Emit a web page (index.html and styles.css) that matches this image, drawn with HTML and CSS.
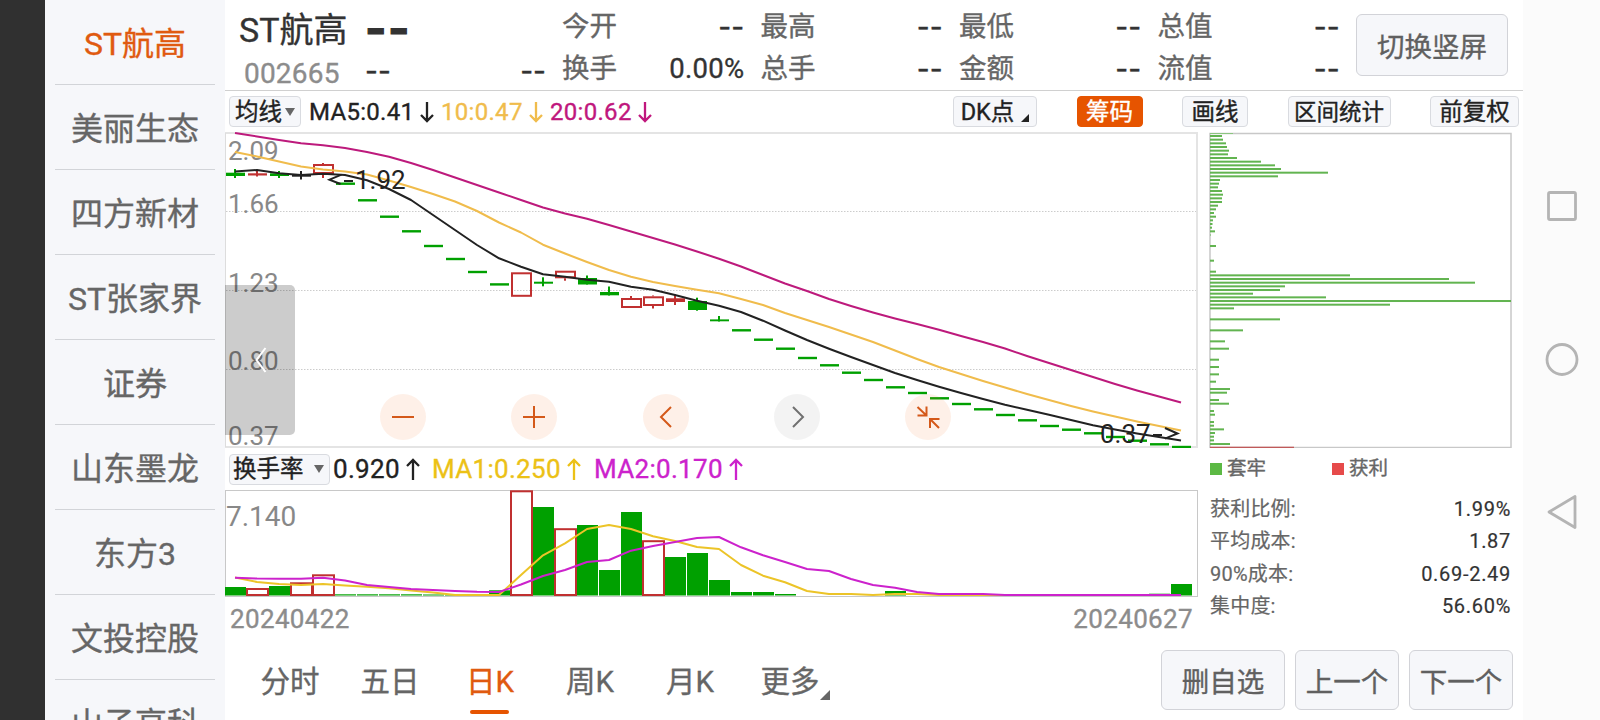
FILE: index.html
```html
<!DOCTYPE html>
<html lang="zh-CN">
<head>
    <meta charset="UTF-8">
    <meta name="viewport" content="width=device-width, initial-scale=1.0">
    <title>ST航高 002665</title>
    <link rel="stylesheet" href="styles.css">
</head>
<body>
    <div class="bezel"></div>

    <ul class="watchlist">
        <li class="active">ST航高</li>
        <li>美丽生态</li>
        <li>四方新材</li>
        <li>ST张家界</li>
        <li>证券</li>
        <li>山东墨龙</li>
        <li>东方3</li>
        <li>文投控股</li>
        <li>山子高科</li>
    </ul>

    <main class="main">
        <header class="quote">
            <div class="stock">
                <div class="stock-name">ST航高</div>
                <div class="stock-code">002665</div>
            </div>
            <div class="price">
                <div class="price-now">--</div>
                <div class="price-change"><span>--</span><span>--</span></div>
            </div>
            <dl class="fields">
                <div><dt>今开</dt><dd class="dash">--</dd></div>
                <div><dt>最高</dt><dd class="dash">--</dd></div>
                <div><dt>最低</dt><dd class="dash">--</dd></div>
                <div><dt>总值</dt><dd class="dash">--</dd></div>
                <div><dt>换手</dt><dd>0.00%</dd></div>
                <div><dt>总手</dt><dd class="dash">--</dd></div>
                <div><dt>金额</dt><dd class="dash">--</dd></div>
                <div><dt>流值</dt><dd class="dash">--</dd></div>
            </dl>
            <button class="btn btn-rotate">切换竖屏</button>
        </header>

        <div class="toolbar">
            <button class="chip chip-ma">均线<i class="caret"></i></button>
            <div class="ma ma5">MA5:0.41<svg class="arrow" viewBox="0 0 14 22"><path d="M7 1v19M1 14l6 6 6-6"/></svg></div>
            <div class="ma ma10">10:0.47<svg class="arrow" viewBox="0 0 14 22"><path d="M7 1v19M1 14l6 6 6-6"/></svg></div>
            <div class="ma ma20">20:0.62<svg class="arrow" viewBox="0 0 14 22"><path d="M7 1v19M1 14l6 6 6-6"/></svg></div>
            <div class="tools">
                <button class="chip chip-dk">DK点<i class="corner"></i></button>
                <button class="chip chip-on">筹码</button>
                <button class="chip">画线</button>
                <button class="chip chip-range">区间统计</button>
                <button class="chip chip-adjust">前复权</button>
            </div>
        </div>

        <div class="content">
            <section class="charts">
                <div class="kline">
                    <svg id="kline" width="973" height="316" viewBox="225 132 973 316"></svg>
                    <div class="drawer"><svg width="12" height="28" viewBox="0 0 12 28"><path d="M10.500 2L1.500 14l9 12"/></svg></div>
                    <div class="zoom">
                        <button><svg viewBox="0 0 46 46"><path d="M12 23h22"/></svg></button>
                        <button><svg viewBox="0 0 46 46"><path d="M12 23h22M23 12v22"/></svg></button>
                        <button><svg viewBox="0 0 46 46"><path d="M28 13L18 23l10 10"/></svg></button>
                        <button class="off"><svg viewBox="0 0 46 46"><path d="M19 13l10 10-10 10"/></svg></button>
                        <button><svg viewBox="0 0 46 46"><path d="M12.500 13l9 8.500M21.500 12.500v9h-9M34 34l-9-9M25 34v-9h9.500"/></svg></button>
                    </div>
                </div>

                <div class="turnover">
                    <button class="chip chip-turnover">换手率<i class="caret"></i></button>
                    <div class="ma to">0.920<svg class="arrow" viewBox="0 0 14 22"><path d="M7 22V2M1 8l6-6 6 6"/></svg></div>
                    <div class="ma to1">MA1:0.250<svg class="arrow" viewBox="0 0 14 22"><path d="M7 22V2M1 8l6-6 6 6"/></svg></div>
                    <div class="ma to2">MA2:0.170<svg class="arrow" viewBox="0 0 14 22"><path d="M7 22V2M1 8l6-6 6 6"/></svg></div>
                </div>

                <svg id="volume" width="973" height="108" viewBox="225 490 973 108"></svg>
                <div class="dates"><span>20240422</span><span>20240627</span></div>
            </section>

            <aside class="chips">
                <svg id="chips" width="304" height="316" viewBox="1209 132 304 316"></svg>
                <div class="legend">
                    <span class="trapped">套牢</span>
                    <span class="profit">获利</span>
                </div>
                <dl class="stats">
                    <div><dt>获利比例:</dt><dd>1.99%</dd></div>
                    <div><dt>平均成本:</dt><dd>1.87</dd></div>
                    <div><dt>90%成本:</dt><dd>0.69-2.49</dd></div>
                    <div><dt>集中度:</dt><dd>56.60%</dd></div>
                </dl>
            </aside>
        </div>

        <footer class="footer">
            <nav class="tabs">
                <a>分时</a>
                <a>五日</a>
                <a class="active">日K</a>
                <a>周K</a>
                <a>月K</a>
                <a>更多<i class="corner"></i></a>
            </nav>
            <button class="btn btn-del">删自选</button>
            <button class="btn">上一个</button>
            <button class="btn">下一个</button>
        </footer>
    </main>

    <div class="sysnav">
        <svg width="36" height="34" viewBox="0 0 36 34"><rect x="4.500" y="3.500" width="27" height="27" rx="1.500"/></svg>
        <svg width="36" height="34" viewBox="0 0 36 34"><circle cx="18" cy="17.500" r="15"/></svg>
        <svg width="36" height="34" viewBox="0 0 36 34"><path d="M5 17L31 1.500v31z"/></svg>
    </div>

    <script>
        const GREEN = '#00a000', RED = '#c03030', BLACK = '#222';
        const STEP = 22;
        const cx = i => 235 + i * STEP;

        // [type, top, bottom, high, low]  g = solid green, r = solid red, h = hollow red, k = flat
        const candles = [
            ['g', 172.7, 176, 169, 178], ['r', 173.3, 175.5, 170.5, 176.5], ['g', 173.3, 176, 171, 178],
            ['k', 174.5, 176.7, 171, 179.5], ['h', 164, 174, 163, 178]
        ];
        [183.7, 200.3, 216.7, 231.3, 246, 259, 272, 284.4].forEach(y => candles.push(['g', y - 1.2, y + 1.2]));
        candles.push(
            ['h', 272.3, 296.8], ['g', 281.7, 283.7, 277.3, 286.3], ['h', 270.7, 278.3, 270.7, 280.7],
            ['g', 278, 284.5, 275.5, 284.5], ['g', 292, 295.3, 286.5, 295.5], ['h', 298, 308, 296, 308],
            ['h', 296.3, 306, 295.5, 308.5], ['r', 298.3, 302, 294.3, 305], ['g', 301, 310, 297.7, 310.7],
            ['g', 319.4, 321.3, 316, 321.5]
        );
        [330.3, 339.7, 348.7, 358, 365.3, 372.7, 380, 387.3, 393, 398.3, 404, 409.3, 415, 420.3, 426,
         429.7, 433.3, 437, 440.7, 444.3, 447].forEach(y => candles.push(['g', y - 1.2, y + 1.2]));

        const ma5 = [171.5, 170, 173.3, 175, 173.7, 175, 180.3, 189, 200, 215, 230, 245, 258.3, 266.7, 274.3, 276.7,
            279.7, 281.7, 286.7, 289.7, 295, 300.7, 305.7, 312, 320.7, 330.5, 340, 348.7, 357, 365, 373, 380, 386.7,
            393, 399, 404.7, 409.7, 414.7, 420, 425.3, 429.5, 433.5, 437, 440.5];
        const ma10 = [152, 156.5, 161.5, 166.5, 169.5, 171.5, 174.5, 180.5, 187, 194, 201.5, 211, 222.5, 232.5, 244.7,
            253.5, 262, 270, 276.7, 282, 286, 289.7, 293.3, 299, 305, 313, 320, 327, 334.5, 342, 350.5, 359, 367, 374,
            381, 387.5, 394, 400, 406, 411.5, 416.5, 421.5, 426, 430.5];
        const ma20 = [133, 136.5, 140, 143.3, 145.3, 148, 152, 156.7, 163, 170, 177.5, 185, 192.5, 200, 207.5, 213.5,
            218.7, 225, 231.5, 238, 244.5, 251.5, 258.7, 266.5, 275, 283.5, 291, 299, 306, 312.5, 318.5, 324, 329.7,
            336, 342, 348.5, 356, 363, 370, 377, 384, 390.5, 396.5, 402.5];

        const line = (pts, color) => `<polyline points="${pts.map((y, i) => cx(i) + ',' + y).join(' ')}"
            fill="none" stroke="${color}" stroke-width="2" stroke-linejoin="round"/>`;
        const rect = (x, y, w, h, fill) => `<rect x="${x}" y="${y}" width="${w}" height="${h}" fill="${fill}"/>`;

        function drawKline() {
            let s = '';
            [211.5, 290.5, 369.5].forEach(y => {
                s += `<line x1="226" x2="1196" y1="${y}" y2="${y}" stroke="#ccc" stroke-dasharray="1.500 1.500"/>`;
            });
            s += '<path d="M225 133h972v314H225" fill="none" stroke="#e4e4e4" stroke-width="2"/>';
            s += '<path d="M225.500 133v314" stroke="#ddd"/>';
            [['2.09', 160], ['1.66', 212.7], ['1.23', 291.7], ['0.80', 369.7], ['0.37', 444.7]].forEach(([t, y]) => {
                s += `<text class="axis" x="228" y="${y}">${t}</text>`;
            });
            candles.forEach(([type, top, bottom, high, low], i) => {
                const x = cx(i);
                if (type === 'h') {
                    if (high) s += rect(x - 1, high, 2, top - high, RED) + rect(x - 1, bottom, 2, low - bottom, RED);
                    s += `<rect x="${x - 9}" y="${top + 1}" width="19" height="${bottom - top - 2}" fill="none" stroke="${RED}" stroke-width="2"/>`;
                } else {
                    const c = { g: GREEN, r: RED, k: BLACK }[type];
                    s += rect(x - 9, top, 19, bottom - top, c);
                    if (high) s += rect(x - 1, high, 2, low - high, c);
                }
            });
            s += line(ma20, '#bd1a7c') + line(ma10, '#f0bc4c') + line(ma5, BLACK);
            s += '<text class="mark" x="355" y="189">1.92</text><path class="mark-line" d="M341.500 174.700L329.500 179.700 340.500 184M344 181h9"/>';
            s += '<text class="mark" x="1100" y="442.700">0.37</text><path class="mark-line" d="M1153 435h9M1165 428l12.500 5.500-12.500 5.200"/>';
            document.getElementById('kline').innerHTML = s;
        }

        function drawVolume() {
            const tops = { 0: 587, 2: 586, 5: 594.3, 6: 594.3, 7: 594.3, 8: 594.3, 9: 594.5, 10: 594.7, 12: 590.3, 14: 507,
                16: 525, 17: 570, 18: 512, 20: 557, 21: 553, 22: 580, 23: 592, 24: 592, 25: 594, 30: 591, 34: 594,
                42: 593.7, 43: 584 };
            const hollow = { 1: 588, 3: 582.3, 4: 574.3, 13: 490.3, 15: 528.2, 19: 540.2 };
            const v1 = [577.5, 582, 584, 585, 584, 585.5, 586.7, 588.3, 590.5, 592.5, 595, 595, 595, 575, 555.3, 543.3, 529,
                525, 529, 536.3, 541, 547, 549, 565, 575.7, 582.3, 591, 594, 594, 595, 594, 594];
            const v2 = [577.7, 578.5, 578.7, 578.7, 577.7, 580.5, 585, 587, 589, 590, 591, 591.8, 592, 584.5, 576, 570, 562,
                560, 550.7, 546, 542, 538, 537, 547.3, 555.3, 562, 569, 571, 579, 585, 587.7, 592, 594, 594, 594];
            while (v1.length < 44) v1.push(595);
            while (v2.length < 44) v2.push(595);

            let s = '<rect x="225.500" y="490.500" width="972" height="106" fill="none" stroke="#c8c8c8"/>';
            s += '<text class="axis axis-vol" x="226" y="526">7.140</text>';
            for (const i in tops) s += rect(cx(i) - 10, tops[i], 21, 595.5 - tops[i], GREEN);
            for (const i in hollow) {
                s += `<rect x="${cx(i) - 10}" y="${hollow[i] + 1}" width="21" height="${594 - hollow[i]}" fill="#fff" stroke="${RED}" stroke-width="2"/>`;
            }
            s += line(v1, '#ecc428') + line(v2, '#cc22cc');
            document.getElementById('volume').innerHTML = s;
        }

        function drawChips() {
            // price level -> bar length
            const bars = [12, 13, 16, 17, 19, 18, 27, 51, 65, 71, 118, 68, 10, 9, 8, 12, 13, 12, 12, 8, 6, 4, 6, 3, 2.5, 2, 5, 0.5];
            Object.assign(bars, { 30: 6, 34: 4, 37: 6, 38: 140, 39: 239, 40: 265, 41: 75, 42: 70, 43: 43, 44: 116, 45: 301,
                46: 180, 47: 24, 50: 70, 53: 33, 56: 15, 58: 19, 61: 9, 63: 9, 65: 9, 67: 6, 69: 20, 70: 17, 72: 9, 73: 19,
                75: 4, 76: 5, 78: 4, 79: 4, 80: 14, 81: 5, 82: 4, 83: 4, 84: 20 });
            let s = '<rect x="1210" y="133.500" width="301" height="314" fill="none" stroke="#c8c8c8" stroke-width="1.500"/>';
            s += rect(1210, 133, 23, 1, '#8cc580');
            bars.forEach((w, k) => { s += rect(1210, 135 + k * 3.667, w, 2, '#62b450'); });
            s += rect(1210, 446.7, 84, 1.3, '#c05a5a');
            document.getElementById('chips').innerHTML = s;
        }

        drawKline();
        drawVolume();
        drawChips();
    </script>
</body>
</html>
```
FILE: styles.css
```css
* {
    box-sizing: border-box;
    margin: 0;
    padding: 0;
}

body {
    display: flex;
    width: 1600px;
    height: 720px;
    overflow: hidden;
    background: #fff;
    color: #333;
    font-family: Roboto, "Noto Sans CJK SC", sans-serif;
    -webkit-text-stroke: 0.350px;
}

button {
    font-family: inherit;
    -webkit-text-stroke: 0.350px;
}

svg {
    display: block;
}

.bezel {
    width: 45px;
    background: #303030;
}

/* left stock list */
.watchlist {
    width: 180px;
    height: 720px;
    padding: 0 10px;
    overflow: hidden;
    background: #f6f7fa;
    list-style: none;
}

.watchlist li {
    height: 85px;
    border-bottom: 1px solid #d2d4d8;
    color: #666;
    font-size: 32px;
    line-height: 88px;
    text-align: center;
    white-space: nowrap;
}

.watchlist .active {
    color: #e05a10;
}

.main {
    width: 1298px;
    height: 720px;
}

/* quote header */
.quote {
    display: flex;
    height: 91px;
    border-bottom: 1px solid #d0d0d0;
}

.stock {
    width: 140px;
    padding: 8px 0 0 14px;
}

.stock-name {
    font-size: 34px;
    line-height: 44px;
    white-space: nowrap;
}

.stock-code {
    padding-left: 5px;
    color: #8c8c8c;
    font-size: 28px;
    letter-spacing: 0.200px;
    line-height: 44px;
}

.price {
    width: 197px;
    font-family: Inter, sans-serif;
}

.price-now {
    height: 54px;
    font-size: 46px;
    font-weight: 700;
    letter-spacing: 1.500px;
    line-height: 56px;
    -webkit-text-stroke: 1.200px;
}

.price-change {
    display: flex;
    justify-content: space-between;
    width: 181px;
    font-size: 28px;
    line-height: 34px;
}

.fields {
    display: grid;
    grid-template-columns: repeat(4, 182.500px);
    grid-auto-rows: 42px;
    column-gap: 16px;
    width: 794px;
    padding-top: 5.500px;
    font-size: 27.500px;
    line-height: 42px;
}

.fields div {
    display: flex;
    justify-content: space-between;
}

.fields dt {
    color: #666;
}

.fields dd {
    letter-spacing: 0.300px;
}

.fields .dash {
    font-family: Inter, sans-serif;
    font-size: 28px;
}

.btn {
    height: 60px;
    width: 104px;
    border: 1px solid #d2d3d8;
    border-radius: 6px;
    background: #f6f7fa;
    color: #606060;
    font-size: 27.500px;
    white-space: nowrap;
}

.btn-rotate {
    width: 152px;
    height: 62px;
    margin-top: 14px;
    padding-bottom: 1px;
}

/* indicator row */
.toolbar {
    display: flex;
    align-items: center;
    height: 41px;
    padding: 0 4px 0 4px;
}

.chip {
    display: flex;
    align-items: center;
    justify-content: center;
    width: 66px;
    height: 31px;
    border: 1px solid #d9dbe0;
    border-radius: 4px;
    background: #f6f7fa;
    color: #222;
    font-size: 23.500px;
    line-height: 28px;
    white-space: nowrap;
}

.chip-ma {
    width: 72px;
}

.chip-dk {
    width: 84px;
    gap: 7px;
}

.chip-on {
    border-color: #e65400;
    background: #e65400;
    color: #fff;
}

.chip-range {
    width: 103px;
    font-size: 22.500px;
}

.chip-adjust {
    width: 89px;
}

.chip-turnover {
    width: 101px;
    justify-content: space-between;
    padding: 0 5px 0 3px;
}

.caret {
    margin-left: 3px;
    border: 5px solid transparent;
    border-top: 8px solid #666;
    border-bottom: 0;
}

.corner {
    align-self: flex-end;
    margin-bottom: 4px;
    border-bottom: 8px solid #222;
    border-left: 8px solid transparent;
}

.ma {
    display: flex;
    align-items: center;
    font-size: 24px;
    letter-spacing: 0.300px;
    white-space: nowrap;
}

.arrow {
    width: 14px;
    height: 22px;
    margin-left: 6px;
    fill: none;
    stroke: currentColor;
    stroke-width: 2.300;
}

.ma5 {
    width: 132px;
    margin-left: 8px;
    color: #222;
}

.ma10 {
    width: 109px;
    color: #f0bc4c;
}

.ma20 {
    color: #c0177d;
}

.tools {
    display: flex;
    gap: 39.500px;
    margin-left: auto;
}

.content {
    display: flex;
    height: 508px;
}

.charts {
    width: 973px;
}

.kline {
    position: relative;
    height: 316px;
}

.axis {
    fill: #888;
    font-size: 26px;
}

.axis-vol {
    font-size: 28px;
}

.mark {
    fill: #222;
    font-size: 26px;
}

.mark-line {
    fill: none;
    stroke: #222;
    stroke-width: 2;
}

/* pull-out handle over the chart */
.drawer {
    position: absolute;
    top: 153px;
    left: 0;
    display: flex;
    align-items: center;
    width: 70px;
    height: 150px;
    padding-left: 30px;
    border-radius: 0 5px 5px 0;
    background: rgba(0, 0, 0, 0.2);
}

.drawer path {
    fill: none;
    stroke: #fff;
    stroke-width: 2;
}

.zoom {
    position: absolute;
    top: 262px;
    left: 155px;
    display: flex;
    gap: 85.300px;
}

.zoom button {
    width: 46px;
    height: 46px;
    border: 0;
    border-radius: 50%;
    background: rgba(250, 120, 50, 0.11);
}

.zoom .off {
    background: rgba(120, 120, 120, 0.09);
}

.zoom path {
    fill: none;
    stroke: #d4591a;
    stroke-width: 2;
}

.zoom .off path {
    stroke: #707070;
}

/* turnover indicator row */
.turnover {
    display: flex;
    align-items: center;
    height: 42px;
    padding-left: 4px;
}

.turnover .ma {
    font-size: 26px;
}

.to {
    width: 99px;
    margin-left: 3px;
    color: #222;
}

.to1 {
    width: 162px;
    color: #ecc116;
}

.to2 {
    color: #cc22cc;
}

.dates {
    display: flex;
    justify-content: space-between;
    padding: 5px 5px 0;
    color: #8c8c8c;
    font-size: 26px;
    letter-spacing: 0.350px;
    line-height: 32px;
}

/* chip distribution */
.chips {
    width: 304px;
    margin-left: 11px;
}

.legend {
    display: flex;
    gap: 66px;
    height: 42px;
    padding-left: 1px;
    color: #666;
    font-size: 19.500px;
    line-height: 40px;
}

.legend span {
    display: flex;
    align-items: center;
    gap: 5px;
}

.legend span::before {
    content: "";
    width: 12px;
    height: 12px;
    background: #5cb944;
}

.legend .profit::before {
    background: #e64a4a;
}

.stats {
    padding: 3px 2px 0 1px;
    font-size: 20px;
    line-height: 32.400px;
    -webkit-text-stroke: 0.200px;
}

.stats div {
    display: flex;
    justify-content: space-between;
}

.stats dt {
    color: #666;
    letter-spacing: 0.200px;
}

.stats dd {
    letter-spacing: 0.700px;
}

/* period tabs and actions */
.footer {
    display: flex;
    align-items: center;
    gap: 10px;
    height: 80px;
    padding-right: 10px;
}

.tabs {
    display: flex;
    margin: 0 auto 0 15px;
}

.tabs a {
    display: flex;
    position: relative;
    align-items: center;
    justify-content: center;
    width: 100px;
    height: 80px;
    padding-bottom: 3px;
    color: #666;
    font-size: 29.500px;
}

.tabs .active {
    color: #e05a10;
}

.tabs .active::after {
    content: "";
    position: absolute;
    bottom: 6px;
    left: 30px;
    width: 39px;
    height: 4px;
    border-radius: 2px;
    background: #e65400;
}

.tabs .corner {
    position: absolute;
    right: 10px;
    bottom: 16px;
    border-bottom: 10px solid #666;
    border-left: 10px solid transparent;
}

.btn-del {
    width: 124px;
}

/* system navigation bar */
.sysnav {
    display: flex;
    flex-direction: column;
    align-items: center;
    gap: 119px;
    width: 77px;
    padding-top: 189px;
    background: #fbfbfb;
}

.sysnav svg {
    fill: none;
    stroke: #b4b4b4;
    stroke-width: 2.800;
    stroke-linejoin: round;
}
```
